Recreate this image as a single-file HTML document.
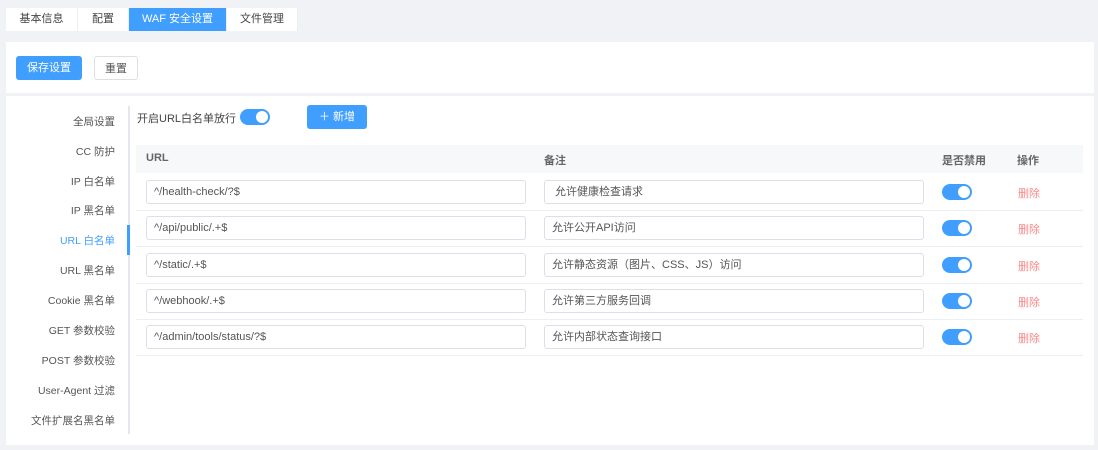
<!DOCTYPE html>
<html><head><meta charset="utf-8"><style>
*{box-sizing:border-box;margin:0;padding:0}
body{width:1098px;height:450px;background:#f0f2f5;font-family:"Liberation Sans","Noto Sans CJK SC",sans-serif;font-size:11px;color:#606266;position:relative;overflow:hidden}
.abs{position:absolute}
.tabs{left:6px;top:8px;height:23px;display:flex;background:#fff}
.tab{height:23px;line-height:23px;text-align:center;color:#444;font-size:11px;border-right:1px solid #eee}
.tab.on{background:#409eff;color:#fff}
.card{background:#fff}
.btn{height:24px;line-height:24px;border-radius:3px;font-size:11px;text-align:center}
.side div{position:absolute;right:0;width:115px;text-align:right;font-size:10.5px;color:#555}
.sw{position:absolute;width:30px;height:16px;border-radius:8px;background:#409eff}
.sw:after{content:"";position:absolute;right:2px;top:2px;width:12px;height:12px;border-radius:50%;background:#fff}
.inp{position:absolute;height:24px;border:1px solid #dcdfe6;border-radius:3px;line-height:23px;padding-left:7px;font-size:11px;color:#555;background:#fff}
.row{position:absolute;left:136px;width:947px;height:1px;background:#ebeef5}
.del{position:absolute;left:1018px;color:#f78989;font-size:11px}
</style></head><body>
<div class="abs tabs"><div class="tab" style="width:72px">基本信息</div><div class="tab" style="width:51px">配置</div><div class="tab on" style="width:98px">WAF 安全设置</div><div class="tab" style="width:71px">文件管理</div></div>
<div class="abs card" style="left:6px;top:42px;width:1088px;height:51px"></div>
<div class="abs btn" style="left:16px;top:56px;width:66px;background:#409eff;color:#fff">保存设置</div>
<div class="abs btn" style="left:94px;top:56px;width:44px;border:1px solid #dcdfe6;color:#555;background:#fff">重置</div>
<div class="abs card" style="left:6px;top:96px;width:1088px;height:349px"></div>
<div class="abs" style="left:128px;top:106px;width:2px;height:328px;background:#e4e7ed"></div>
<div class="abs" style="left:127px;top:225px;width:3px;height:30px;background:#409eff"></div>
<div class="abs side" style="left:0;top:0;width:115px;height:450px">
<div style="top:114px">全局设置</div><div style="top:144px">CC 防护</div><div style="top:174px">IP 白名单</div><div style="top:203px">IP 黑名单</div><div style="top:233px;color:#409eff">URL 白名单</div><div style="top:263px">URL 黑名单</div><div style="top:293px">Cookie 黑名单</div><div style="top:323px">GET 参数校验</div><div style="top:353px">POST 参数校验</div><div style="top:383px">User-Agent 过滤</div><div style="top:413px">文件扩展名黑名单</div>
</div>
<div class="abs" style="left:137px;top:110px;color:#444">开启URL白名单放行</div>
<div class="sw" style="left:240px;top:109px"></div>
<div class="abs btn" style="left:307px;top:105px;width:60px;background:#409eff;color:#fff">＋ 新增</div>
<div class="abs" style="left:136px;top:145px;width:947px;height:28px;background:#f7f8fa"></div>
<div class="abs" style="left:146px;top:152px;font-weight:bold;color:#666">URL</div>
<div class="abs" style="left:544px;top:152px;font-weight:bold;color:#666">备注</div>
<div class="abs" style="left:942px;top:152px;font-weight:bold;color:#666">是否禁用</div>
<div class="abs" style="left:1017px;top:152px;font-weight:bold;color:#666">操作</div>
<div class="inp" style="left:146px;top:180px;width:380px">^/health-check/?$</div><div class="inp" style="left:544px;top:180px;width:380px">&nbsp;允许健康检查请求</div><div class="sw" style="left:942px;top:184px"></div><div class="del" style="top:185px">删除</div><div class="row" style="top:210px"></div>
<div class="inp" style="left:146px;top:216px;width:380px">^/api/public/.+$</div><div class="inp" style="left:544px;top:216px;width:380px">允许公开API访问</div><div class="sw" style="left:942px;top:220px"></div><div class="del" style="top:221px">删除</div><div class="row" style="top:246px"></div>
<div class="inp" style="left:146px;top:253px;width:380px">^/static/.+$</div><div class="inp" style="left:544px;top:253px;width:380px">允许静态资源（图片、CSS、JS）访问</div><div class="sw" style="left:942px;top:257px"></div><div class="del" style="top:258px">删除</div><div class="row" style="top:283px"></div>
<div class="inp" style="left:146px;top:289px;width:380px">^/webhook/.+$</div><div class="inp" style="left:544px;top:289px;width:380px">允许第三方服务回调</div><div class="sw" style="left:942px;top:293px"></div><div class="del" style="top:294px">删除</div><div class="row" style="top:319px"></div>
<div class="inp" style="left:146px;top:325px;width:380px">^/admin/tools/status/?$</div><div class="inp" style="left:544px;top:325px;width:380px">允许内部状态查询接口</div><div class="sw" style="left:942px;top:329px"></div><div class="del" style="top:330px">删除</div><div class="row" style="top:355px"></div>
</body></html>
